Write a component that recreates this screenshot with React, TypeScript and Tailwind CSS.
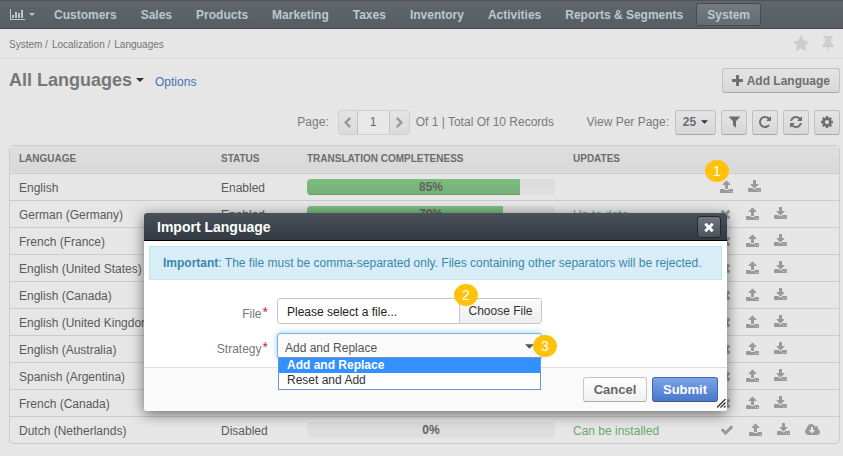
import React from 'react';

type IconProps = { box: string; className: string; d: string };

function Icon({ box, className, d }: IconProps) {
  return (
    <svg viewBox={box} className={`shrink-0 fill-current ${className}`} aria-hidden="true">
      <path d={d} />
    </svg>
  );
}

const paths = {
  upload:
    'M1344 1472q0-26-19-45t-45-19-45 19-19 45 19 45 45 19 45-19 19-45zm256 0q0-26-19-45t-45-19-45 19-19 45 19 45 45 19 45-19 19-45zm128-224v320q0 40-28 68t-68 28h-1472q-40 0-68-28t-28-68v-320q0-40 28-68t68-28h427q21 56 70.5 92t110.5 36h256q61 0 110.5-36t70.5-92h427q40 0 68 28t28 68zm-325-648q-17 40-59 40h-256v448q0 26-19 45t-45 19h-256q-26 0-45-19t-19-45v-448h-256q-42 0-59-40-17-39 14-69l448-448q18-19 45-19t45 19l448 448q31 30 14 69z',
  download:
    'M1344 1344q0-26-19-45t-45-19-45 19-19 45 19 45 45 19 45-19 19-45zm256 0q0-26-19-45t-45-19-45 19-19 45 19 45 45 19 45-19 19-45zm128-224v320q0 40-28 68t-68 28h-1472q-40 0-68-28t-28-68v-320q0-40 28-68t68-28h465l135 136q58 56 136 56t136-56l136-136h464q40 0 68 28t28 68zm-325-569q17 41-14 70l-448 448q-18 19-45 19t-45-19l-448-448q-31-29-14-70 17-39 59-39h256v-448q0-26 19-45t45-19h256q26 0 45 19t19 45v448h256q42 0 59 39z',
  times:
    'M1490 1322q0 40-28 68l-136 136q-28 28-68 28t-68-28l-294-294-294 294q-28 28-68 28t-68-28l-136-136q-28-28-28-68t28-68l294-294-294-294q-28-28-28-68t28-68l136-136q28-28 68-28t68 28l294 294 294-294q28-28 68-28t68 28l136 136q28 28 28 68t-28 68l-294 294 294 294q28 28 28 68z',
  check:
    'M1671 566q0 40-28 68l-724 724-136 136q-28 28-68 28t-68-28l-136-136-362-362q-28-28-28-68t28-68l136-136q28-28 68-28t68 28l294 295 656-657q28-28 68-28t68 28l136 136q28 28 28 68z',
  cloud:
    'M1280 928q0-14-9-23t-23-9h-224v-352q0-13-9.5-22.5t-22.5-9.5h-192q-13 0-22.5 9.5t-9.5 22.5v352h-224q-13 0-22.5 9.5t-9.5 22.5q0 14 9 23l352 352q9 9 23 9t23-9l351-351q10-12 10-24zm640 224q0 159-112.5 271.5t-271.5 112.5h-1088q-185 0-316.5-131.5t-131.5-316.5q0-130 70-240t188-165q-2-30-2-43 0-212 150-362t362-150q156 0 285.5 87t188.5 231q71-62 166-62 106 0 181 75t75 181q0 76-41 138 130 31 213.5 135.5t83.5 238.5z',
  star:
    'M1728 647q0 22-26 48l-363 354 86 500q1 7 1 20 0 21-10.5 35.5t-30.5 14.5q-19 0-40-12l-449-236-449 236q-22 12-40 12-21 0-31.5-14.5t-10.5-35.5q0-6 2-20l86-500-364-354q-25-27-25-48 0-37 56-46l502-73 225-455q19-41 49-41t49 41l225 455 502 73q56 9 56 46z',
  pin:
    'M800 864v-448q0-14-9-23t-23-9-23 9-9 23v448q0 14 9 23t23 9 23-9 9-23zm672 352q0 26-19 45t-45 19h-429l-51 483q-2 12-10.5 20.5t-20.5 8.5h-1q-27 0-32-27l-76-485h-404q-26 0-45-19t-19-45q0-123 78.5-221.5t177.5-98.5v-512q-52 0-90-38t-38-90 38-90 90-38h640q52 0 90 38t38 90-38 90-90 38v512q99 0 177.5 98.5t78.5 221.5z',
  plus:
    'M1600 736v192q0 40-28 68t-68 28h-416v416q0 40-28 68t-68 28h-192q-40 0-68-28t-28-68v-416h-416q-40 0-68-28t-28-68v-192q0-40 28-68t68-28h416v-416q0-40 28-68t68-28h192q40 0 68 28t28 68v416h416q40 0 68 28t28 68z',
  filter:
    'M1595 295q17 41-14 70l-493 493v742q0 42-39 59-13 5-25 5-27 0-45-19l-256-256q-19-19-19-45v-486l-493-493q-31-29-14-70 17-39 59-39h1280q42 0 59 39z',
  repeat:
    'M1664 256v448q0 26-19 45t-45 19h-448q-42 0-59-40-17-39 14-69l138-138q-148-137-349-137-104 0-198.5 40.5t-163.5 109.5-109.5 163.5-40.5 198.5 40.5 198.5 109.5 163.5 163.5 109.5 198.5 40.5q119 0 225-52t179-147q7-10 23-12 15 0 25 9l137 138q9 8 9.5 20.5t-7.5 22.5q-109 132-264 204.5t-327 72.5q-156 0-298-61t-245-164-164-245-61-298 61-298 164-245 245-164 298-61q147 0 284.5 55.5t244.5 156.5l130-129q29-31 70-14 39 17 39 59z',
  refresh:
    'M1639 1056q0 5-1 7-64 268-268 434.5t-478 166.5q-146 0-282.5-55t-243.5-157l-129 129q-19 19-45 19t-45-19-19-45v-448q0-26 19-45t45-19h448q26 0 45 19t19 45-19 45l-137 137q71 66 161 102t187 36q134 0 250-65t186-179q11-17 53-117 8-23 30-23h192q13 0 22.5 9.5t9.5 22.5zm25-800v448q0 26-19 45t-45 19h-448q-26 0-45-19t-19-45 19-45l138-138q-148-137-349-137-134 0-250 65t-186 179q-11 17-53 117-8 23-30 23h-199q-13 0-22.5-9.5t-9.5-22.5v-7q65-268 270-434.5t480-166.5q146 0 284 55.5t245 156.5l130-129q19-19 45-19t45 19 19 45z',
  cog:
    'M1152 896q0-106-75-181t-181-75-181 75-75 181 75 181 181 75 181-75 75-181zm512-109v222q0 12-8 23t-20 13l-185 28q-19 54-39 91 35 50 107 138 10 12 10 25t-9 23q-27 37-99 108t-94 71q-12 0-26-9l-138-108q-44 23-91 38-16 136-29 186-7 28-36 28h-222q-14 0-24.5-8.5t-11.5-21.5l-28-184q-49-16-90-37l-141 107q-10 9-25 9-14 0-25-11-126-114-165-168-7-10-7-23 0-12 8-23 15-21 51-66.5t54-70.5q-27-50-41-99l-183-27q-13-2-21-12.5t-8-23.5v-222q0-12 8-23t19-13l186-28q14-46 39-92-40-57-107-138-10-12-10-24 0-10 9-23 26-36 98.5-107.5t94.5-71.5q13 0 26 10l138 107q44-23 91-38 16-136 29-186 7-28 36-28h222q14 0 24.5 8.5t11.5 21.5l28 184q49 16 90 37l142-107q9-9 24-9 13 0 25 10 129 119 165 170 7 8 7 22 0 12-8 23-15 21-51 66.5t-54 70.5q26 50 41 98l183 28q13 2 21 12.5t8 23.5z',
  chevron:
    'M1427 301l-531 531 531 531q19 19 19 45t-19 45l-166 166q-19 19-45 19t-45-19l-742-742q-19-19-19-45t19-45l742-742q19-19 45-19t45 19l166 166q19 19 19 45t-19 45z',
};

function Caret({ className }: { className: string }) {
  return (
    <svg viewBox="0 0 8 4" className={`shrink-0 fill-current ${className}`} aria-hidden="true">
      <path d="M0 0h8L4 4z" />
    </svg>
  );
}

const menu = [
  'Customers',
  'Sales',
  'Products',
  'Marketing',
  'Taxes',
  'Inventory',
  'Activities',
  'Reports & Segments',
  'System',
];

type Row = { name: string; status: string; done: number; update: string; first: 'none' | 'times' | 'check' };

const rows: Row[] = [
  { name: 'English', status: 'Enabled', done: 85.8, update: '', first: 'none' },
  { name: 'German (Germany)', status: 'Enabled', done: 79, update: 'Up to date', first: 'times' },
  { name: 'French (France)', status: 'Enabled', done: 75, update: 'Up to date', first: 'times' },
  { name: 'English (United States)', status: 'Disabled', done: 0, update: 'Up to date', first: 'times' },
  { name: 'English (Canada)', status: 'Disabled', done: 0, update: 'Up to date', first: 'times' },
  { name: 'English (United Kingdom)', status: 'Disabled', done: 0, update: 'Up to date', first: 'times' },
  { name: 'English (Australia)', status: 'Disabled', done: 0, update: 'Up to date', first: 'times' },
  { name: 'Spanish (Argentina)', status: 'Disabled', done: 0, update: 'Up to date', first: 'times' },
  { name: 'French (Canada)', status: 'Disabled', done: 0, update: 'Up to date', first: 'times' },
  { name: 'Dutch (Netherlands)', status: 'Disabled', done: 0, update: 'Can be installed', first: 'check' },
];

const greyButton =
  'flex items-center justify-center rounded-[3px] border border-[#c0c0c0] border-b-[#a9a9a9] bg-linear-to-b from-[#e4e4e4] to-[#d8d8d8] text-[#6e6e6e]';

function NavBar() {
  return (
    <nav className="flex h-[29px] items-center border-t border-b border-t-[#55525c] border-b-[#4a4a55] bg-linear-to-b from-[#5f676d] to-[#565e64] pl-[10px] text-[12px] leading-4 font-bold text-[#bcc7ce]">
      <button aria-label="Dashboards" className="mr-2 flex items-center gap-1">
        <svg viewBox="0 0 15 11" className="h-[11px] w-[15px] fill-current" aria-hidden="true">
          <path d="M0 0h1v10h14v1H0zM2 6h2v3H2zM5 3h2v6H5zM8 4h2v5H8zM11 1h2v8h-2z" />
        </svg>
        <Caret className="h-[3px] w-[6px]" />
      </button>
      <ul className="flex items-center gap-[2px]">
        {menu.map((item) => (
          <li key={item}>
            <a
              href="#"
              className={
                item === 'System'
                  ? 'flex h-[23px] items-center rounded-[3px] border border-[#464b54] bg-linear-to-b from-[#737a82] to-[#646b73] px-[10px]'
                  : 'flex h-[23px] items-center px-[11px]'
              }
            >
              {item}
            </a>
          </li>
        ))}
      </ul>
    </nav>
  );
}

function Breadcrumbs() {
  return (
    <div className="flex h-[30px] items-center justify-between border-b border-[#dadada] pr-[9px] pl-[9px] text-[10px] leading-4 text-[#747474]">
      <div className="flex gap-1 pt-[2px]">
        <span>System /</span>
        <span>Localization /</span>
        <span>Languages</span>
      </div>
      <div className="flex items-center gap-[13px] text-[#cdcdcd]">
        <button aria-label="Favorite">
          <Icon box="64 64 1664 1664" className="h-4 w-4" d={paths.star} />
        </button>
        <button aria-label="Pin">
          <Icon box="320 64 1152 1728" className="h-[17px] w-3" d={paths.pin} />
        </button>
      </div>
    </div>
  );
}

function Toolbar() {
  return (
    <div className="flex h-[26px] items-center text-[12px] leading-4 text-[#7a7a7a]">
      <div className="flex flex-1 items-center justify-end">
        <label htmlFor="page">Page:</label>
        <div className="mr-[6px] ml-[9px] flex h-[25px] items-stretch rounded-[4px] border border-[#cfcfcf] bg-linear-to-b from-[#e4e4e4] to-[#dadada]">
          <button aria-label="Previous page" className="flex w-[18px] items-center justify-center text-[#999]">
            <Icon box="400 0 1050 1664" className="h-[11px] w-[7px]" d={paths.chevron} />
          </button>
          <input
            id="page"
            defaultValue="1"
            className="w-[33px] border-x border-[#c4c4c4] bg-[#e8e8e8] text-center text-[12px] text-[#666] outline-none"
          />
          <button aria-label="Next page" className="flex w-[19px] items-center justify-center text-[#999]">
            <Icon box="400 0 1050 1664" className="h-[11px] w-[7px] rotate-180" d={paths.chevron} />
          </button>
        </div>
        <span>Of 1 | Total Of 10 Records</span>
      </div>
      <div className="flex w-[286px] items-center justify-end gap-[5px]">
        <span className="mr-px">View Per Page:</span>
        <button className={`${greyButton} h-[25px] w-[41px] gap-[5px] font-bold`}>
          25
          <Caret className="h-[4px] w-[7px] text-[#333]" />
        </button>
        <button aria-label="Filters" className={`${greyButton} h-[25px] w-[26px]`}>
          <Icon box="192 192 1408 1536" className="h-3 w-[11px]" d={paths.filter} />
        </button>
        <button aria-label="Refresh" className={`${greyButton} h-[25px] w-[26px]`}>
          <Icon box="128 128 1536 1536" className="h-3 w-3" d={paths.repeat} />
        </button>
        <button aria-label="Reset" className={`${greyButton} h-[25px] w-[26px]`}>
          <Icon box="128 128 1536 1536" className="h-3 w-3" d={paths.refresh} />
        </button>
        <button aria-label="Grid settings" className={`${greyButton} h-[25px] w-[26px]`}>
          <Icon box="128 128 1536 1536" className="h-3 w-3" d={paths.cog} />
        </button>
      </div>
    </div>
  );
}

function LanguageTable() {
  return (
    <div className="mt-[10px] rounded-[4px] border border-[#cbcbcb]">
      <table className="w-full table-fixed text-left text-[12px] leading-4 text-[#5a5a5a]">
        <colgroup>
          <col className="w-[202px]" />
          <col className="w-[86px]" />
          <col className="w-[266px]" />
          <col className="w-[147px]" />
          <col />
        </colgroup>
        <thead>
          <tr className="h-[27px] border-b border-[#cbcbcb] bg-linear-to-b from-[#dfdfdf] to-[#d8d8d8] text-[10px] text-[#6d6d6d]">
            <th className="px-[9px]">LANGUAGE</th>
            <th className="px-[9px]">STATUS</th>
            <th className="px-[9px]">TRANSLATION COMPLETENESS</th>
            <th className="px-[9px]">UPDATES</th>
            <th aria-label="Actions" />
          </tr>
        </thead>
        <tbody>
          {rows.map((row) => (
            <tr key={row.name} className="h-[27px] border-b border-[#cbcbcb] last:border-b-0">
              <td className="px-[9px] pt-[2px] whitespace-nowrap">{row.name}</td>
              <td className="px-[9px] pt-[2px]">{row.status}</td>
              <td className="px-[9px]">
                <div className="relative h-4 overflow-hidden rounded-[4px] bg-linear-to-b from-[#dadada] to-[#e0e0e0]">
                  <div
                    className="h-full border-[#68a06a] bg-linear-to-b from-[#7dbd7f] to-[#74b076]"
                    style={{ width: `${row.done}%`, borderBottomWidth: row.done ? 1 : 0 }}
                  />
                  <span className="absolute inset-0 text-center font-bold text-[#636363]">
                    {`${Math.floor(row.done)}%`}
                  </span>
                </div>
              </td>
              <td className="px-[9px] pt-[2px] text-[#69a86b]">{row.update}</td>
              <td className="pl-[9px]">
                <div className="flex items-center gap-[15px] text-[#999]">
                  {row.first === 'times' && (
                    <button aria-label="Disable">
                      <Icon box="192 0 1408 1792" className="h-[14px] w-[11px]" d={paths.times} />
                    </button>
                  )}
                  {row.first === 'check' && (
                    <button aria-label="Enable">
                      <Icon box="0 0 1792 1792" className="h-[14px] w-[14px]" d={paths.check} />
                    </button>
                  )}
                  <button aria-label="Import">
                    <Icon box="64 0 1664 1792" className="h-[14px] w-[13px]" d={paths.upload} />
                  </button>
                  <button aria-label="Export">
                    <Icon box="64 0 1664 1792" className="h-[14px] w-[13px]" d={paths.download} />
                  </button>
                  {row.first === 'check' && (
                    <button aria-label="Install">
                      <Icon box="0 0 1920 1792" className="h-[14px] w-[15px]" d={paths.cloud} />
                    </button>
                  )}
                </div>
              </td>
            </tr>
          ))}
        </tbody>
      </table>
    </div>
  );
}

function Marker({ n, className }: { n: number; className: string }) {
  return (
    <span
      className={`absolute z-20 flex h-[22px] w-6 items-center justify-center rounded-[50%] bg-[#ffc20a] text-[14px] leading-4 text-white ${className}`}
    >
      {n}
    </span>
  );
}

function FieldLabel({ htmlFor, text }: { htmlFor: string; text: string }) {
  return (
    <label htmlFor={htmlFor} className="flex w-[133px] items-start justify-end gap-px pt-2 pr-[9px]">
      {text}
      <span className="text-[14px] leading-3 text-[#c8292b]">*</span>
    </label>
  );
}

function ImportDialog() {
  return (
    <div
      role="dialog"
      aria-labelledby="dialog-title"
      className="absolute top-[213px] left-[144px] w-[583px] rounded-[3px] bg-white text-[12px] leading-4 shadow-[0_3px_14px_rgba(0,0,0,0.55)]"
    >
      <div className="flex h-[28px] items-center justify-between rounded-t-[3px] border-b border-black bg-linear-to-b from-[#4a515b] to-[#333a42] pr-[6px] pl-[13px]">
        <h2 id="dialog-title" className="text-[14px] font-bold text-white">
          Import Language
        </h2>
        <button
          aria-label="Close"
          className="flex h-[22px] w-[24px] items-center justify-center rounded-[3px] border border-[#23282e] bg-linear-to-b from-[#6d747d] to-[#4c535b] text-white"
        >
          <Icon box="302 238 1188 1316" className="h-[10px] w-[10px]" d={paths.times} />
        </button>
      </div>
      <div className="m-[5px] border border-[#bce8f1] bg-[#d9edf7] px-[13px] py-2 text-[#3a87ad]">
        <b>Important</b>: The file must be comma-separated only. Files containing other separators will be rejected.
      </div>
      <form className="pt-[13px] text-[#777]">
        <div className="mb-[9px] flex h-[26px]">
          <FieldLabel htmlFor="file" text="File" />
          <div className="relative w-[265px]">
            <input id="file" type="file" className="sr-only" />
            <label
              htmlFor="file"
              className="flex h-full items-stretch rounded-[3px] border border-[#c6c6c6] bg-white text-[#222]"
            >
              <span className="flex flex-1 items-center pt-[2px] pl-[9px]">Please select a file...</span>
              <span className="flex w-[82px] items-center justify-center rounded-r-[2px] border-l border-[#c6c6c6] bg-linear-to-b from-[#fcfcfc] to-[#ededed] text-[#333]">
                Choose File
              </span>
            </label>
            <Marker n={2} className="top-[-14px] left-[177px]" />
          </div>
        </div>
        <div className="flex h-[26px]">
          <FieldLabel htmlFor="strategy" text="Strategy" />
          <div className="relative w-[265px]">
            <select
              id="strategy"
              defaultValue="add"
              className="h-full w-full appearance-none rounded-[3px] border border-[#79b4e8] bg-[#fafafa] pt-1 pl-[7px] text-[12px] text-[#555] shadow-[0_0_6px_rgba(82,168,236,0.6)] outline-none"
            >
              <option value="add">Add and Replace</option>
              <option value="reset">Reset and Add</option>
            </select>
            <Caret className="absolute top-[11px] right-[8px] h-[5px] w-[9px] text-[#555]" />
            <ul
              role="listbox"
              className="absolute top-[24px] right-px left-px z-10 border border-[#6f93cc] bg-white text-[#333]"
            >
              <li role="option" aria-selected="true" className="bg-[#3390ff] px-2 leading-[15px] font-bold text-white">
                Add and Replace
              </li>
              <li role="option" aria-selected="false" className="px-2 pb-[2px] leading-[14px]">
                Reset and Add
              </li>
            </ul>
            <Marker n={3} className="top-[2px] left-[256px]" />
          </div>
        </div>
      </form>
      <div className="relative mt-2 flex justify-end gap-[5px] rounded-b-[3px] border-t border-[#e0e0e0] bg-[#fafafa] px-[9px] py-[9px] text-[13px] font-bold">
        <button className="h-[25px] w-16 rounded-[3px] border border-[#c6c6c6] border-b-[#aaa] bg-linear-to-b from-white to-[#f0f0f0] text-[#666]">
          Cancel
        </button>
        <button className="h-[25px] w-[66px] rounded-[3px] border border-[#4468b0] border-b-[#38558f] bg-linear-to-b from-[#7ba3e6] to-[#4b77cb] text-white">
          Submit
        </button>
        <svg viewBox="0 0 9 9" className="absolute right-px bottom-[3px] h-[9px] w-[9px]" aria-hidden="true">
          <path d="M0 8.500 8.500 0M3.500 8.500 8.500 3.500M7 8.500 8.500 7" stroke="#333" strokeWidth="1.300" fill="none" />
        </svg>
      </div>
    </div>
  );
}

export default function App() {
  return (
    <div className="relative min-h-screen overflow-hidden bg-[#e6e6e6] font-['Liberation_Sans',Arial,sans-serif]">
      <NavBar />
      <Breadcrumbs />
      <main className="pr-[3px] pl-[9px]">
        <div className="flex h-[50px] items-start justify-between pt-[9px]">
          <div className="flex items-center pt-[2px]">
            <h1 className="text-[18px] leading-5 font-bold text-[#777]">All Languages</h1>
            <Caret className="mr-[11px] ml-1 h-1 w-2 text-[#333]" />
            <a href="#" className="pt-1 text-[12px] leading-4 text-[#4471b8]">
              Options
            </a>
          </div>
          <button className={`${greyButton} h-[25px] gap-1 px-[9px] text-[12px] font-bold`}>
            <Icon box="192 128 1408 1408" className="h-[11px] w-[11px]" d={paths.plus} />
            Add Language
          </button>
        </div>
        <Toolbar />
        <LanguageTable />
      </main>
      <Marker n={1} className="top-[160px] left-[705px]" />
      <ImportDialog />
    </div>
  );
}
